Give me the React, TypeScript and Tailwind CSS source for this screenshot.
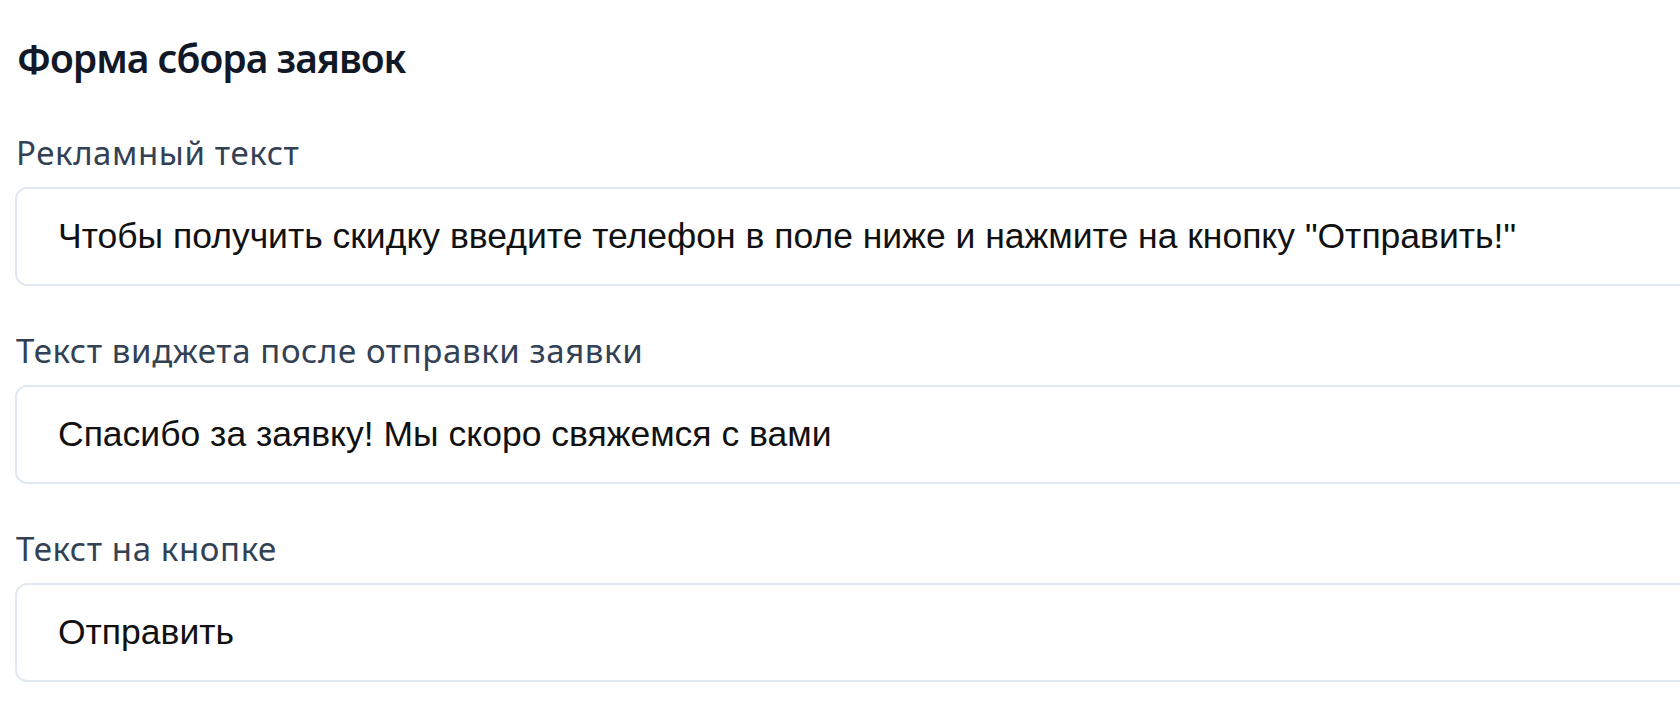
const fields = [
  { label: 'Рекламный текст', value: 'Чтобы получить скидку введите телефон в поле ниже и нажмите на кнопку "Отправить!"' },
  { label: 'Текст виджета после отправки заявки', value: 'Спасибо за заявку! Мы скоро свяжемся с вами' },
  { label: 'Текст на кнопке', value: 'Отправить' },
]

export default function App() {
  return (
    <div className="min-h-[718px] bg-white overflow-hidden pl-[15px] pt-[32px]" style={{ fontFamily: '"Noto Sans", sans-serif' }}>
      <h2 className="text-[39px] leading-[52px] font-semibold tracking-[-1px] text-[#111827] pl-[2px]">Форма сбора заявок</h2>
      <div className="mt-[49px] flex flex-col gap-[45px] w-[1700px]">
        {fields.map((f) => (
          <div key={f.label}>
            <label className="block text-[33px] leading-[40px] tracking-[0.6px] text-[#334155] pl-[1px] mb-[14px]">{f.label}</label>
            <input
              readOnly
              value={f.value}
              className="block w-full h-[99px] rounded-[12px] border-2 border-[#e2e8f0] px-[41px] text-[35.5px] text-[#111] outline-none"
              style={{ fontFamily: '"Liberation Sans", Arial, sans-serif' }}
            />
          </div>
        ))}
      </div>
    </div>
  )
}
